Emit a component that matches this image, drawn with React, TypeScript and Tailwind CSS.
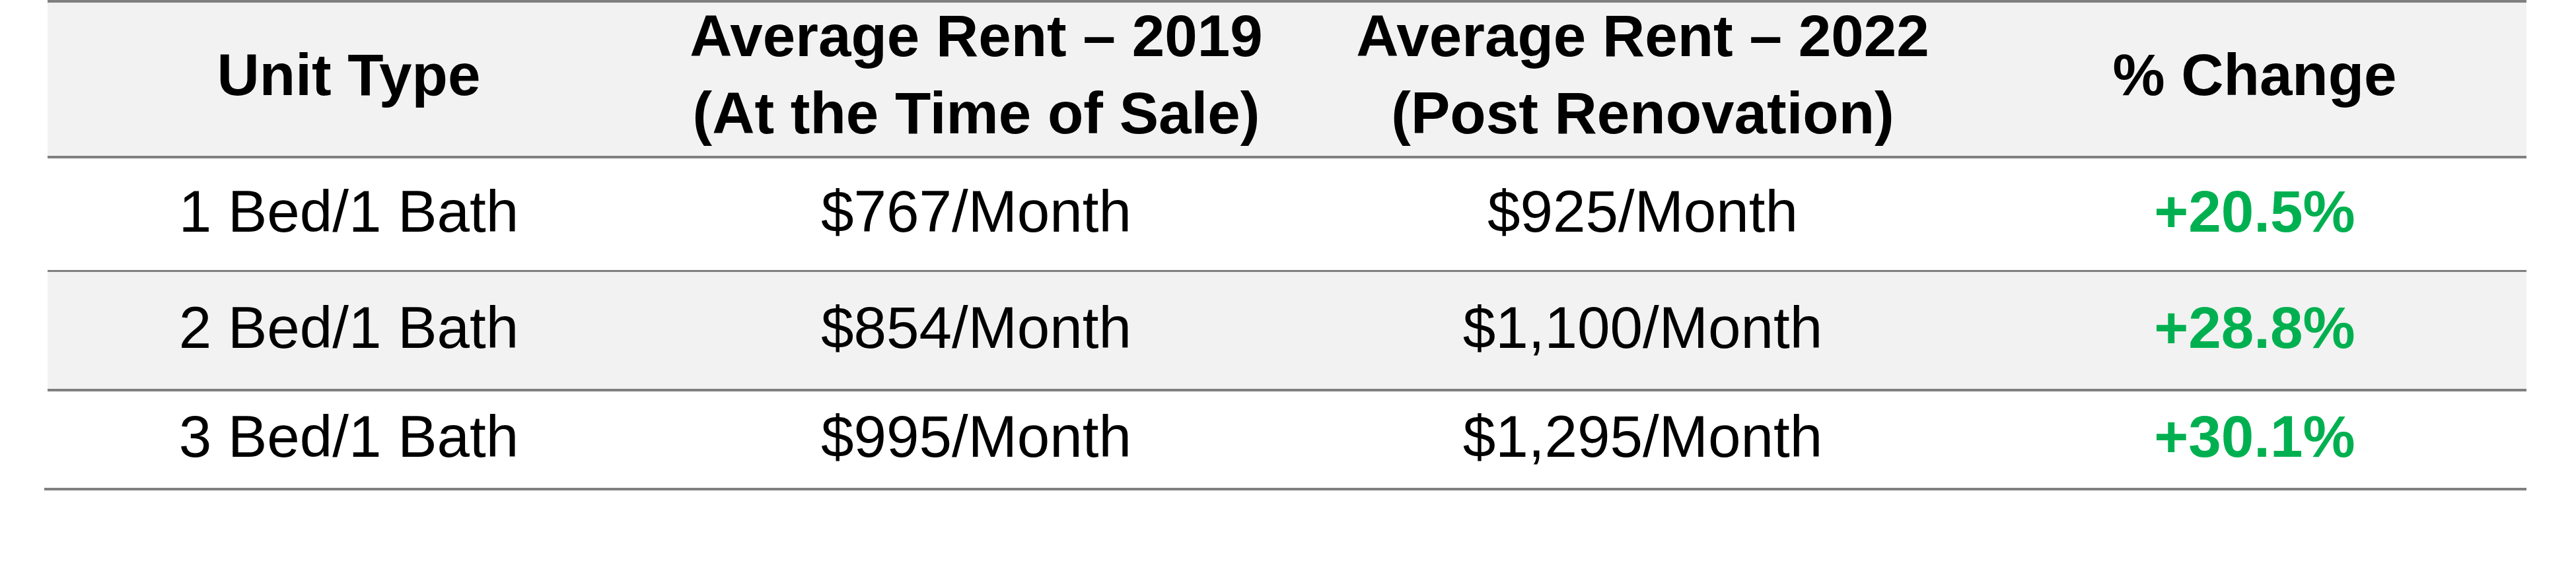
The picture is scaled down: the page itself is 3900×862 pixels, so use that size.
const rows = [
  { unit: '1 Bed/1 Bath', before: '$767/Month', after: '$925/Month', change: '+20.5%', h: 'h-[172px] border-b-[3px]', bg: 'bg-white' },
  { unit: '2 Bed/1 Bath', before: '$854/Month', after: '$1,100/Month', change: '+28.8%', h: 'h-[181px] border-b-[4px]', bg: 'bg-[#f2f2f2]' },
  { unit: '3 Bed/1 Bath', before: '$995/Month', after: '$1,295/Month', change: '+30.1%', h: 'h-[146px] border-b-0', bg: 'bg-white' },
];

const cols = ['w-[912px]', 'w-[988px]', 'w-[1030px]', 'w-[823px]'];

export default function App() {
  return (
    <div className="w-[3900px] h-[862px] bg-white font-['Liberation_Sans',Arial,sans-serif] text-black">
      <div className="ml-[72px] w-[3753px]">
        {/* header */}
        <div className="flex h-[240px] bg-[#f2f2f2] border-y-[4px] border-[#808080] text-[89px] font-bold leading-[117px] text-center">
          <div className={`${cols[0]} flex items-center justify-center pb-[14px]`}>Unit Type</div>
          <div className={`${cols[1]} flex items-center justify-center pb-[14px]`}>
            <div>
              Average Rent – 2019
              <br />
              (At the Time of Sale)
            </div>
          </div>
          <div className={`${cols[2]} flex items-center justify-center pb-[14px]`}>
            <div>
              Average Rent – 2022
              <br />
              (Post Renovation)
            </div>
          </div>
          <div className={`${cols[3]} flex items-center justify-center pb-[14px]`}>% Change</div>
        </div>

        {rows.map((r) => (
          <div key={r.unit} className={`flex ${r.h} ${r.bg} border-[#808080] text-[89px] leading-[100px] text-center`}>
            <div className={`${cols[0]} flex items-center justify-center pb-[10px]`}>{r.unit}</div>
            <div className={`${cols[1]} flex items-center justify-center pb-[10px]`}>{r.before}</div>
            <div className={`${cols[2]} flex items-center justify-center pb-[10px]`}>{r.after}</div>
            <div className={`${cols[3]} flex items-center justify-center pb-[10px] font-bold text-[#00b050]`}>{r.change}</div>
          </div>
        ))}
        <div className="h-[4px] bg-[#808080] -ml-[5px] w-[3758px]" />
      </div>
    </div>
  );
}
